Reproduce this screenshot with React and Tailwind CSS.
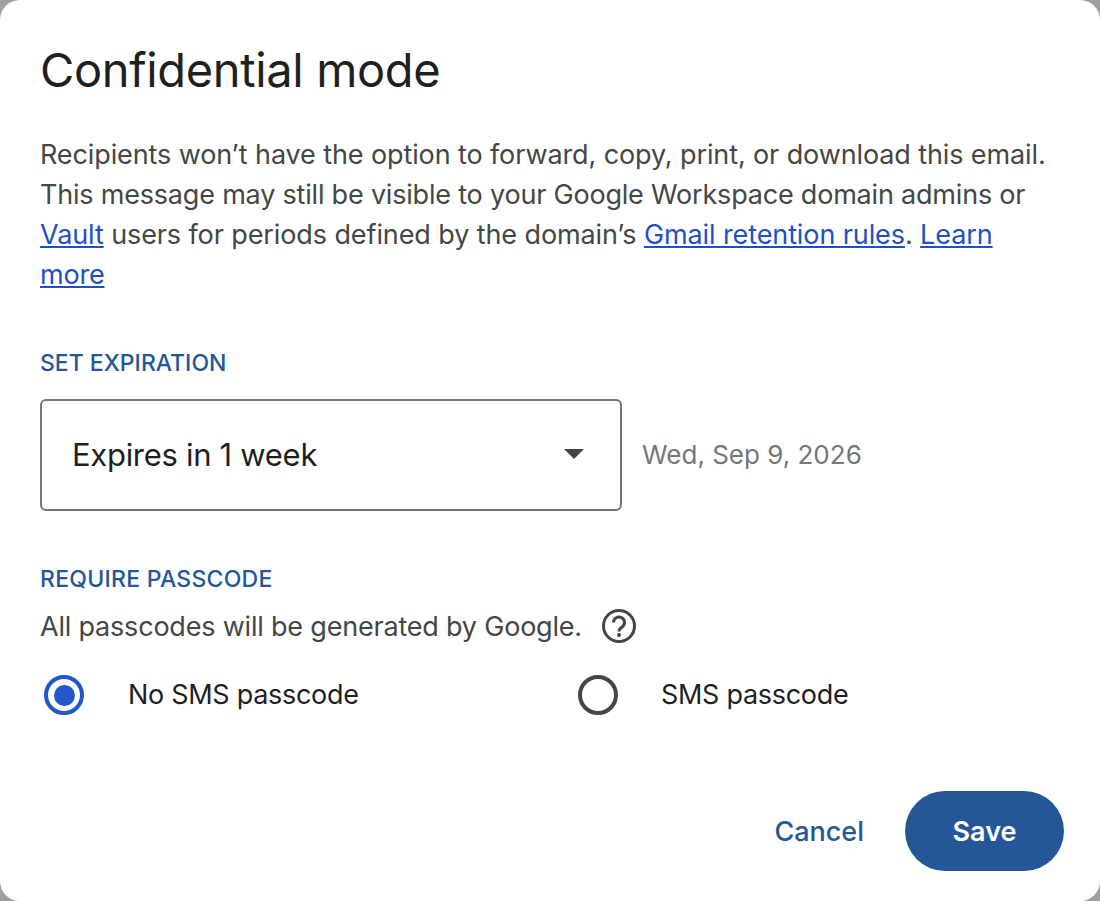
import React from 'react';

const App = () => {
  return (
    <div className="h-[901px] w-[1100px] bg-[#9f9f9f] font-['Inter',sans-serif] overflow-hidden">
      <div className="flex h-full flex-col rounded-[20px] bg-white pl-10 pr-9">
        <h1 className="mt-[42px] text-[47px] leading-[56px] font-normal tracking-[-0.35px] text-[#1f1f1f]">Confidential mode</h1>

        <p className="mt-[37px] w-[1030px] text-[27px] leading-10 text-[#444746]">
          <span className="tracking-[-0.11px]">Recipients won’t have the option to forward, copy, print, or download this email.</span>
          <br />
          <span className="tracking-[-0.2px]">This message may still be visible to your Google Workspace domain admins or</span>
          <br />
          <span className="tracking-[-0.1px]">
            <a className="text-[#1f4fc8] underline">Vault</a> users for periods defined by the domain’s{' '}
            <a className="text-[#1f4fc8] underline">Gmail retention rules</a>.{' '}
            <a className="text-[#1f4fc8] underline">Learn</a>
          </span>
          <br />
          <a className="text-[#1f4fc8] underline tracking-[-0.2px]">more</a>
        </p>

        <div className="mt-[52px] text-[23px] leading-8 font-medium text-[#255798]">SET EXPIRATION</div>

        <div className="mt-[20px] flex items-center gap-5">
          <div className="flex h-[112px] w-[582px] items-center justify-between rounded-[6px] border-2 border-[#747775] pl-[30px] pr-[36px]">
            <span className="text-[31px] tracking-[-0.3px] text-[#1f1f1f]">Expires in 1 week</span>
            <svg className="mb-[2px]" width="20" height="10" viewBox="0 0 20 10">
              <path d="M0 0h20L10 10z" fill="#444746" />
            </svg>
          </div>
          <span className="mb-[2px] text-[26px] text-[#747775]">Wed, Sep 9, 2026</span>
        </div>

        <div className="mt-[52px] text-[23px] leading-8 font-medium tracking-[0.25px] text-[#255798]">REQUIRE PASSCODE</div>

        <div className="mt-[12px] flex items-center gap-5 text-[27px] leading-10 tracking-[-0.2px] text-[#444746]">
          <span>All passcodes will be generated by Google.</span>
          <svg className="mb-[2px]" width="34" height="34" viewBox="0 0 34 34" fill="none">
            <circle cx="17" cy="17" r="15.5" stroke="#444746" strokeWidth="3" />
            <path d="M11.5 13.5a5.5 5.5 0 1 1 8.6 4.5c-2 1.4-3.1 2.3-3.1 4.5" stroke="#444746" strokeWidth="3" />
            <circle cx="17" cy="26" r="2" fill="#444746" />
          </svg>
        </div>

        <div className="mt-[28px] flex items-center text-[27px] tracking-[-0.3px] text-[#1f1f1f]">
          <div className="flex w-[534px] items-center">
            <span className="ml-1 flex h-10 w-10 items-center justify-center rounded-full border-[4px] border-[#2456cc]">
              <span className="h-[21px] w-[21px] rounded-full bg-[#2456cc]" />
            </span>
            <span className="ml-[44px]">No SMS passcode</span>
          </div>
          <div className="flex items-center">
            <span className="ml-1 h-10 w-10 rounded-full border-[4px] border-[#444746]" />
            <span className="ml-[43px]">SMS passcode</span>
          </div>
        </div>

        <div className="mt-[75px] flex items-center justify-end">
          <button className="mr-[41px] pt-1 text-[27px] font-medium text-[#255798]">Cancel</button>
          <button className="h-20 w-[159px] rounded-full bg-[#255798] pt-1 text-[27px] font-semibold text-white">Save</button>
        </div>
      </div>
    </div>
  );
};

export default App;
